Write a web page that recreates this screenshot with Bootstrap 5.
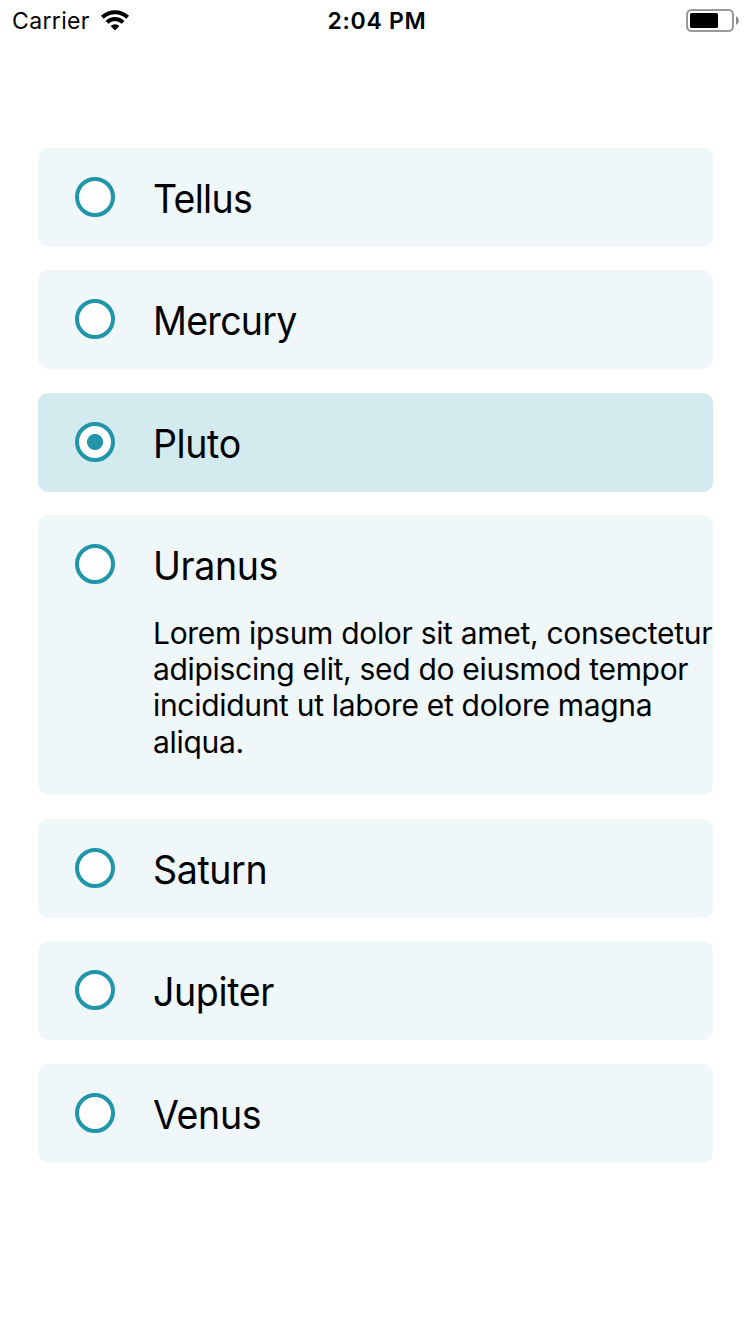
<!DOCTYPE html>
<html lang="en">
<head>
<meta charset="utf-8">
<meta name="viewport" content="width=device-width, initial-scale=1">
<title>Planets</title>
<link href="https://cdn.jsdelivr.net/npm/bootstrap@5.3.0/dist/css/bootstrap.min.css" rel="stylesheet">
<style>
body{font-family:Inter,"Liberation Sans",sans-serif;color:#000;background:#fff;overflow:hidden}
.status{height:40px;padding:0 11px 0 12px;font-size:23px;line-height:38px}
.status .side{flex:1 1 0}
.carrier{letter-spacing:.35px;padding-top:2px}
.clock{font-weight:600;letter-spacing:.7px;padding:2px 0 0 3px}
.options{padding:108px 37px 0 38px}
.option{background:#eff7f9;border-radius:10px;padding:29px 0 0 37px;height:99px;margin-bottom:23px;cursor:pointer}
.option:nth-child(even){margin-bottom:24px}
.option.tall{height:280px}
.option.chosen{background:#d3eaee}
.ring{appearance:none;width:40px;height:40px;border:4px solid #2196aa;border-radius:50%;background:#fff;margin:0 38px 0 0;flex:none}
.ring:checked{background:radial-gradient(circle,#2196aa 7.6px,#fff 8.4px)}
.label{font-size:39.5px;line-height:45px;letter-spacing:-.4px;transform:scaleX(.95);transform-origin:0 0}
.tight{letter-spacing:-.75px}
.desc{font-size:30px;line-height:36.4px;margin-top:25.5px;white-space:nowrap;letter-spacing:-.31px}
</style>
</head>
<body>
<header class="status d-flex align-items-center">
  <div class="side d-flex align-items-center"><span class="carrier">Carrier</span>
    <svg class="ms-2" width="32" height="22" viewBox="98 9 32 22"><g fill="none" stroke="#000" stroke-width="4"><path d="M102.3 17.2A18.5 18.5 0 0 1 127.7 17.2"/><path d="M107 22.3A11.3 11.3 0 0 1 123 22.3"/></g><path d="M110.6 26.1A6.2 6.2 0 0 1 119.4 26.1L115 30.4Z"/></svg>
  </div>
  <span class="clock">2:04 PM</span>
  <div class="side d-flex justify-content-end">
    <svg width="53" height="24" viewBox="686 8 53 24"><rect x="687" y="10" width="46" height="21" rx="4.5" fill="none" stroke="#999" stroke-width="2"/><rect x="690" y="13" width="28" height="15" rx="1.5"/><path d="M736 16Q739 18 739 20.5T736 25Z" fill="#8c8c8c"/></svg>
  </div>
</header>
<main class="options d-flex flex-column">
  <label class="option d-flex align-items-start"><input class="ring" type="radio" name="planet"><span class="label tight">Tellus</span></label>
  <label class="option d-flex align-items-start"><input class="ring" type="radio" name="planet"><span class="label tight">Mercury</span></label>
  <label class="option chosen d-flex align-items-start"><input class="ring" type="radio" name="planet" checked><span class="label">Pluto</span></label>
  <label class="option tall d-flex align-items-start"><input class="ring" type="radio" name="planet"><span class="d-block"><span class="label d-block">Uranus</span><span class="desc d-block">Lorem ipsum dolor sit amet, consectetur<br>adipiscing elit, sed do eiusmod tempor<br>incididunt ut labore et dolore magna<br>aliqua.</span></span></label>
  <label class="option d-flex align-items-start"><input class="ring" type="radio" name="planet"><span class="label">Saturn</span></label>
  <label class="option d-flex align-items-start"><input class="ring" type="radio" name="planet"><span class="label">Jupiter</span></label>
  <label class="option d-flex align-items-start"><input class="ring" type="radio" name="planet"><span class="label">Venus</span></label>
</main>
<script src="https://cdn.jsdelivr.net/npm/bootstrap@5.3.0/dist/js/bootstrap.bundle.min.js"></script>
</body>
</html>
